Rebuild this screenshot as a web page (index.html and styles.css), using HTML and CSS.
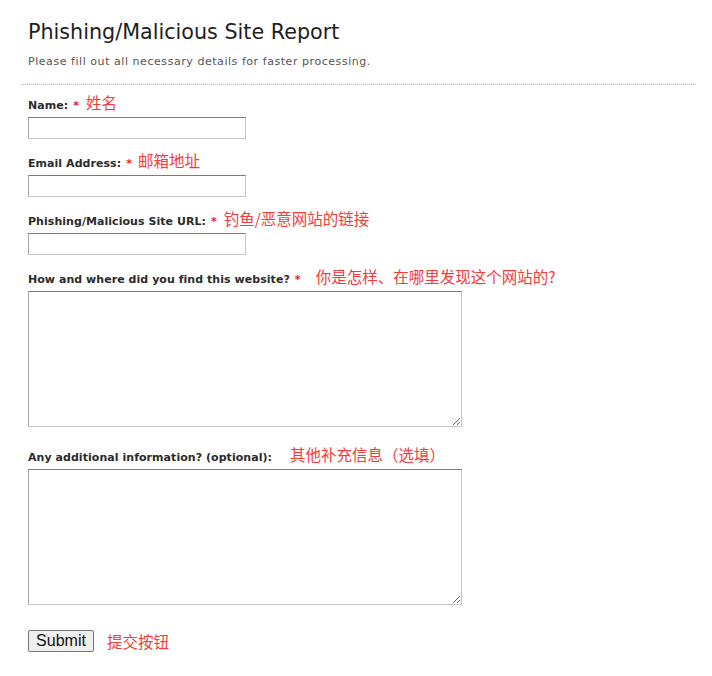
FILE: index.html
```html
<!DOCTYPE html>
<html lang="en">
<head>
<meta charset="utf-8">
<title>Phishing/Malicious Site Report</title>
<link rel="stylesheet" href="styles.css">
</head>
<body>
<div class="page">
  <header class="head">
    <h1 class="title">Phishing/Malicious Site Report</h1>
    <p class="subtitle">Please fill out all necessary details for faster processing.</p>
  </header>
  <div class="rule"></div>
  <form class="form">
    <div class="field">
      <div class="label-row"><label class="label" for="name">Name:</label><span class="req">*</span><span class="note note-name">姓名</span></div>
      <input class="text" id="name" type="text">
    </div>
    <div class="field">
      <div class="label-row"><label class="label" for="email">Email Address:</label><span class="req">*</span><span class="note note-email">邮箱地址</span></div>
      <input class="text" id="email" type="text">
    </div>
    <div class="field">
      <div class="label-row"><label class="label" for="url">Phishing/Malicious Site URL:</label><span class="req">*</span><span class="note note-url">钓鱼/恶意网站的链接</span></div>
      <input class="text" id="url" type="text">
    </div>
    <div class="field field-area">
      <div class="label-row"><label class="label" for="how">How and where did you find this website?</label><span class="req">*</span><span class="note note-how">你是怎样、在哪里发现这个网站的?</span></div>
      <textarea class="area" id="how"></textarea>
    </div>
    <div class="field field-area">
      <div class="label-row"><label class="label" for="info">Any additional information? (optional):</label><span class="note note-info">其他补充信息（选填）</span></div>
      <textarea class="area" id="info"></textarea>
    </div>
    <div class="submit-row">
      <button class="submit" type="button">Submit</button><span class="note note-submit">提交按钮</span>
    </div>
  </form>
</div>
</body>
</html>
```
FILE: styles.css
```css
html, body {
  margin: 0;
  padding: 0;
  background: #fff;
}

.page {
  font-family: "DejaVu Sans", "Noto Sans", sans-serif;
  color: #222;
  padding-top: 19px;
}

.head {
  padding-left: 28px;
}

.title {
  margin: 0;
  font-size: 20.7px;
  font-weight: normal;
  line-height: 26px;
  color: #1e1e1e;
  letter-spacing: 0;
}

.subtitle {
  margin: 9px 0 0;
  font-size: 11px;
  line-height: 16px;
  color: #555;
  letter-spacing: 0.55px;
}

.rule {
  margin: 14px 16px 0 21px;
  border-top: 1px dotted #b8b8b8;
}

.form {
  padding-left: 28px;
  padding-top: 5px;
}

.field {
  margin-bottom: 9px;
}

.field-area {
  margin-bottom: 15px;
}

.label-row {
  display: flex;
  align-items: baseline;
  height: 27px;
  line-height: 24px;
}

.label {
  font-size: 11px;
  font-weight: bold;
  color: #2b2b2b;
  letter-spacing: 0.05px;
}

.req {
  margin-left: 5px;
  font-size: 11px;
  font-weight: bold;
  color: #e8202a;
}

.note {
  font-family: "Noto Sans CJK SC", sans-serif;
  font-size: 15.5px;
  color: #f43b3b;
}

.note-name { margin-left: 7px; }
.note-email { margin-left: 6px; }
.note-url { margin-left: 7px; }
.note-how { margin-left: 15px; }
.note-info { margin-left: 18px; }
.note-submit { margin-left: 13px; }

.text {
  display: block;
  box-sizing: border-box;
  width: 218px;
  height: 22px;
  margin: 0;
  border: 1px solid #c6c6c6;
  border-top-color: #7b7b7b;
  border-left-color: #a8a8a8;
  background: #fff;
  padding: 0 3px;
}

.area {
  display: block;
  box-sizing: border-box;
  width: 434px;
  height: 136px;
  margin: 0;
  border: 1px solid #c6c6c6;
  border-top-color: #7b7b7b;
  border-left-color: #a8a8a8;
  background: #fff;
  padding: 2px;
}

.submit-row {
  display: flex;
  align-items: center;
  margin-top: 25px;
}

.submit {
  box-sizing: border-box;
  height: 22px;
  width: 66px;
  padding: 0;
  font-family: "Liberation Sans", Arial, sans-serif;
  font-size: 16px;
  color: #111;
  background: #efefef;
  border: 1px solid #767676;
  border-radius: 2px;
}
```
